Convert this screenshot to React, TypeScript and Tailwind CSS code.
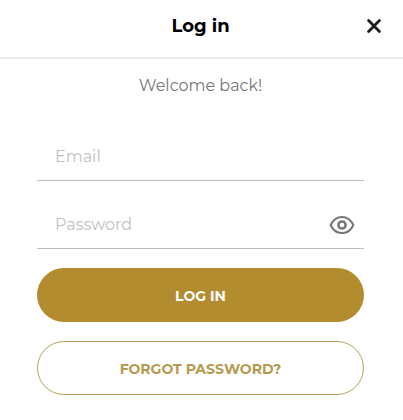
import { useState } from 'react';

const fieldClass =
  'h-12 w-full border-b border-[#bdbdbd] bg-transparent pl-[18px] text-base font-normal text-[#555555] outline-none placeholder:text-[#c2c2c2] placeholder:opacity-100 focus:border-[#b38c2f]';

function CloseIcon() {
  return (
    <svg width="14" height="14" viewBox="0 0 14 14" fill="none" stroke="#1c1c1c" strokeWidth="2.8" strokeLinecap="round" aria-hidden="true">
      <path d="M1.6 1.6 12.4 12.4M12.4 1.6 1.6 12.4" />
    </svg>
  );
}

function EyeIcon() {
  return (
    <svg width="26" height="20" viewBox="0 0 26 20" fill="none" stroke="#777777" strokeWidth="2" strokeLinejoin="round" aria-hidden="true">
      <path d="M1.6 10C4 4.9 8.1 1.9 13 1.9S22 4.9 24.4 10C22 15.1 17.9 18.1 13 18.1S4 15.1 1.6 10Z" />
      <circle cx="13" cy="10" r="3.6" strokeWidth="2.5" />
    </svg>
  );
}

export default function App() {
  const [email, setEmail] = useState('');
  const [password, setPassword] = useState('');
  const [showPassword, setShowPassword] = useState(false);

  return (
    <div className="min-h-screen bg-white font-['Montserrat','Inter',sans-serif]">
      {/* Header */}
      <header className="grid h-[59px] grid-cols-[1fr_auto_1fr] items-center border-b-2 border-[#ebebeb] pr-[17px] pb-1.5 pl-[15px]">
        <h1 className="col-start-2 text-lg font-bold text-black">Log in</h1>
        <button type="button" aria-label="Close" className="flex size-6 cursor-pointer items-center justify-center justify-self-end">
          <CloseIcon />
        </button>
      </header>

      <main className="pt-[15px] pr-[39px] pb-6 pl-[37px]">
        <p className="text-center text-base leading-6 font-normal text-[#777777]">Welcome back!</p>

        <form className="mt-[35px] flex flex-col" onSubmit={(e) => e.preventDefault()}>
          <input
            type="email"
            aria-label="Email"
            placeholder="Email"
            className={fieldClass}
            value={email}
            onChange={(e) => setEmail(e.target.value)}
          />

          <div className="relative mt-5">
            <input
              type={showPassword ? 'text' : 'password'}
              aria-label="Password"
              placeholder="Password"
              className={`${fieldClass} pr-12`}
              value={password}
              onChange={(e) => setPassword(e.target.value)}
            />
            <button
              type="button"
              aria-label={showPassword ? 'Hide password' : 'Show password'}
              className="absolute inset-y-0 right-2 flex cursor-pointer items-center px-px"
              onClick={() => setShowPassword(!showPassword)}
            >
              <EyeIcon />
            </button>
          </div>

          {/* Actions */}
          <button type="submit" className="mt-[19px] h-[54px] cursor-pointer rounded-full bg-[#b38c2f] pt-0.5 text-sm font-bold text-white uppercase">
            Log in
          </button>
          <button type="button" className="mt-[19px] h-[54px] cursor-pointer rounded-full border border-[#b9a05a] pt-0.5 text-sm font-bold text-[#b59a50] uppercase">
            Forgot password?
          </button>
        </form>
      </main>
    </div>
  );
}
